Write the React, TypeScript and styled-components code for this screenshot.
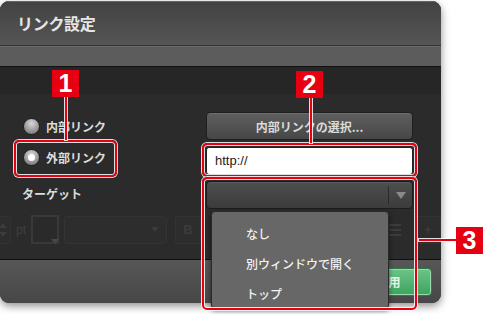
import styled, { createGlobalStyle } from "styled-components";

const GlobalStyle = createGlobalStyle`
  html, body {
    margin: 0;
    padding: 0;
    background: #fff;
  }
  body {
    font-family: "Noto Sans CJK JP", "Liberation Sans", sans-serif;
  }
`;

const targets = ["なし", "別ウィンドウで開く", "トップ"];

export default function App() {
  return (
    <Stage>
      <GlobalStyle />
      <Dialog>
        <Header>リンク設定</Header>
        <Band />
        <Body>
          <Form>
            <RadioLabel>
              <Radio />
              内部リンク
            </RadioLabel>
            <PickButton type="button">内部リンクの選択...</PickButton>

            <RadioLabel $shift={-3}>
              <Radio $checked />
              外部リンク
            </RadioLabel>
            <UrlInput defaultValue="http://" />

            <FieldLabel>ターゲット</FieldLabel>
            <Select>
              <SelectValue />
              <SelectArrow>
                <Caret />
              </SelectArrow>
            </Select>
          </Form>

          <Toolbar>
            <Spinner>
              <SpinArrow $up />
              <SpinArrow />
            </Spinner>
            <Unit>pt</Unit>
            <Swatch />
            <GhostSelect>
              <GhostCaret />
            </GhostSelect>
            <GhostButton>B</GhostButton>
            <Spacer />
            <ListIcon>
              <span />
              <span />
              <span />
            </ListIcon>
            <GhostButton>+</GhostButton>
          </Toolbar>
        </Body>
        <Footer>
          <ApplyButton type="button">適用</ApplyButton>
        </Footer>
      </Dialog>

      <Menu>
        {targets.map((t) => (
          <MenuItem key={t}>{t}</MenuItem>
        ))}
      </Menu>

      {/* annotations */}
      <Callout style={{ left: 14, top: 140, width: 103, height: 37 }} />
      <Callout style={{ left: 202, top: 143, width: 215, height: 34 }} />
      <Callout style={{ left: 202, top: 177, width: 215, height: 133 }} />
      <Leader style={{ left: 65, top: 96, width: 2, height: 44 }} />
      <Leader style={{ left: 310, top: 97, width: 2, height: 46 }} />
      <Leader style={{ left: 419, top: 239, width: 38, height: 2 }} />
      <Badge style={{ left: 52, top: 70 }}>1</Badge>
      <Badge style={{ left: 296, top: 71 }}>2</Badge>
      <Badge style={{ left: 456, top: 227 }}>3</Badge>
    </Stage>
  );
}

const Stage = styled.div`
  position: relative;
  width: 487px;
  height: 314px;
  overflow: hidden;
  background: #fff;
`;

const Dialog = styled.div`
  margin-top: 1px;
  width: 441px;
  height: 302px;
  display: flex;
  flex-direction: column;
  border-radius: 9px;
  overflow: hidden;
  background: #2a2a2a;
  box-shadow: 0 3px 8px rgba(0, 0, 0, 0.45);
`;

const Header = styled.div`
  height: 44px;
  flex: none;
  display: flex;
  align-items: center;
  padding: 0 17px;
  background: linear-gradient(#424242, #555);
  border-bottom: 1px solid #333;
  box-shadow: inset 0 1px 0 #666;
  color: #e6e6e6;
  font-size: 16px;
  font-weight: 700;
  letter-spacing: -0.3px;
`;

const Band = styled.div`
  height: 19px;
  flex: none;
  background: #5c5c5c;
  border-top: 1px solid #6a6a6a;
  border-bottom: 1px solid #111;
`;

const Body = styled.div`
  flex: 1;
  overflow: hidden;
  padding-top: 45px;
  background: linear-gradient(#262626 0, #262626 27px, #2b2b2b 28px);
`;

const Form = styled.div`
  display: grid;
  grid-template-columns: 192px 207px;
  grid-auto-rows: 28px;
  row-gap: 6.5px;
  padding-left: 14px;
  align-items: center;
`;

const RadioLabel = styled.label<{ $shift?: number }>`
  display: flex;
  align-items: center;
  gap: 6px;
  padding-left: 9px;
  margin-top: ${(p) => (p.$shift ?? 0) * 2}px;
  color: #dcdcdc;
  font-size: 12px;
  font-weight: 700;
`;

const Radio = styled.span<{ $checked?: boolean }>`
  position: relative;
  width: 15px;
  height: 15px;
  border-radius: 50%;
  border: 1px solid #222;
  background: radial-gradient(circle at 50% 30%, #d8d8d8, #8a8a8a 70%, #6a6a6a);

  &::after {
    content: "";
    display: ${(p) => (p.$checked ? "block" : "none")};
    position: absolute;
    left: 4px;
    top: 4px;
    width: 7px;
    height: 7px;
    border-radius: 50%;
    background: #fff;
  }
`;

const FieldLabel = styled.span`
  padding-left: 8px;
  margin-top: -4px;
  color: #dcdcdc;
  font-size: 12px;
  font-weight: 700;
`;

const PickButton = styled.button`
  height: 28px;
  border: 1px solid #1e1e1e;
  border-radius: 4px;
  background: linear-gradient(#5f5f5f, #474747);
  box-shadow: inset 0 1px 0 #6e6e6e;
  color: #dadada;
  font-family: inherit;
  font-size: 12px;
  font-weight: 700;
`;

const UrlInput = styled.input`
  box-sizing: border-box;
  height: 28px;
  border: 1px solid #222;
  border-radius: 3px;
  padding: 0 8px;
  background: #fff;
  color: #1a1a1a;
  font-family: "Liberation Sans", sans-serif;
  font-size: 13px;
  outline: none;
`;

const Select = styled.div`
  box-sizing: border-box;
  height: 28px;
  display: flex;
  border: 1px solid #1c1c1c;
  border-radius: 4px;
  background: linear-gradient(#4e4e4e, #3b3b3b);
  box-shadow: inset 0 1px 0 #5a5a5a;
`;

const SelectValue = styled.div`
  flex: 1;
`;

const SelectArrow = styled.div`
  width: 23px;
  display: flex;
  align-items: center;
  justify-content: center;
  border-left: 1px solid #2a2a2a;
  margin: 4px 0;
`;

const Caret = styled.span`
  width: 0;
  height: 0;
  border-left: 5px solid transparent;
  border-right: 5px solid transparent;
  border-top: 7px solid #8a8a8a;
`;

const Toolbar = styled.div`
  display: flex;
  align-items: center;
  gap: 5px;
  height: 29px;
  margin-top: 6px;
  margin-left: -12px;
  color: #3a3a3a;
`;

const GhostBox = styled.div`
  box-sizing: border-box;
  height: 28px;
  border: 1px solid #333;
  border-radius: 3px;
  background: #2d2d2d;
`;

const Spinner = styled(GhostBox)`
  width: 23px;
  display: flex;
  flex-direction: column;
  align-items: flex-end;
  justify-content: center;
  gap: 4px;
  padding-right: 3px;
`;

const SpinArrow = styled.span<{ $up?: boolean }>`
  width: 0;
  height: 0;
  border-left: 4px solid transparent;
  border-right: 4px solid transparent;
  ${(p) => (p.$up ? "border-bottom" : "border-top")}: 5px solid #3c3c3c;
`;

const Unit = styled.span`
  font-family: "Liberation Sans", sans-serif;
  font-size: 12px;
  color: #404040;
`;

const Swatch = styled(GhostBox)`
  position: relative;
  width: 28px;
  height: 29px;
  border: 2px solid #393939;
  border-radius: 0;
  background: #2a2a2a;

  &::after {
    content: "";
    position: absolute;
    right: -2px;
    bottom: -2px;
    width: 0;
    height: 0;
    border-left: 4px solid transparent;
    border-right: 4px solid transparent;
    border-top: 5px solid #484848;
  }
`;

const GhostSelect = styled(GhostBox)`
  width: 103px;
  display: flex;
  justify-content: flex-end;
  align-items: center;
  padding-right: 7px;
`;

const GhostCaret = styled.span`
  border-left: 4px solid transparent;
  border-right: 4px solid transparent;
  border-top: 5px solid #3c3c3c;
`;

const GhostButton = styled(GhostBox)`
  width: 26px;
  margin-left: 3px;
  display: flex;
  align-items: center;
  justify-content: center;
  font-family: "Liberation Sans", sans-serif;
  font-size: 13px;
  font-weight: 700;
  color: #3c3c3c;
`;

const Spacer = styled.div`
  flex: 1;
`;

const ListIcon = styled.div`
  width: 14px;
  display: flex;
  flex-direction: column;
  gap: 3px;
  margin-right: 6px;

  span {
    height: 2px;
    background: #3c3c3c;
  }
`;

const Footer = styled.div`
  height: 43px;
  flex: none;
  display: flex;
  align-items: center;
  justify-content: flex-end;
  padding-right: 9px;
  border-top: 1px solid #111;
  background: linear-gradient(#575757, #474747);
`;

const ApplyButton = styled.button`
  width: 87px;
  height: 28px;
  border: 1px solid #2d7a48;
  border-radius: 4px;
  background: linear-gradient(#6cc487, #3da45f);
  box-shadow: inset 0 0 0 1px #9ad9ad;
  color: #e8f5ec;
  font-family: inherit;
  font-size: 12px;
  font-weight: 700;
`;

const Menu = styled.div`
  position: absolute;
  left: 211px;
  top: 211px;
  box-sizing: border-box;
  width: 178px;
  height: 98px;
  padding-top: 6px;
  border: 1px solid #2a2a2a;
  border-radius: 4px;
  background: #676767;
  box-shadow: 0 2px 5px rgba(0, 0, 0, 0.5);
`;

const MenuItem = styled.div`
  height: 30px;
  display: flex;
  align-items: center;
  padding-left: 34px;
  color: #f2f2f2;
  font-size: 12px;
  font-weight: 500;
`;

const Callout = styled.div`
  position: absolute;
  box-sizing: border-box;
  border: 2px solid #e60012;
  border-radius: 5px;
  box-shadow: 0 0 0 1px rgba(255, 255, 255, 0.85),
    inset 0 0 0 1px rgba(255, 255, 255, 0.85);
  pointer-events: none;
`;

const Leader = styled.div`
  position: absolute;
  background: #e60012;
  box-shadow: 0 0 0 1px rgba(255, 255, 255, 0.85);
`;

const Badge = styled.div`
  position: absolute;
  width: 27px;
  height: 27px;
  display: flex;
  align-items: center;
  justify-content: center;
  background: #e60012;
  color: #fff;
  font-family: "Liberation Sans", sans-serif;
  font-size: 25px;
  font-weight: 700;
  line-height: 1;
`;
